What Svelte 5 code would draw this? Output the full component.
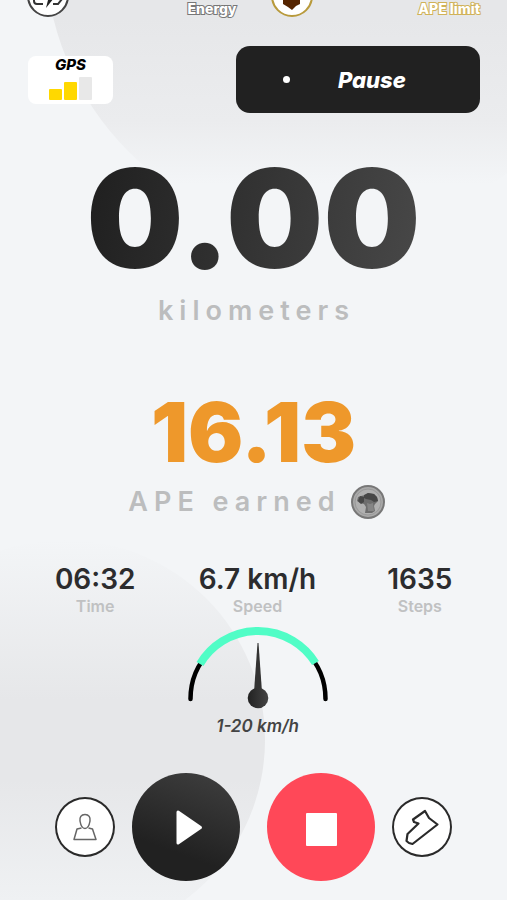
<script>
  const distance = "0.00";
  const earned = "16.13";
  const speedRange = "1-20 km/h";

  const stats = [
    { value: "06:32", label: "Time" },
    { value: "6.7 km/h", label: "Speed" },
    { value: "1635", label: "Steps" },
  ];

  const gpsBars = [
    { height: 11, active: true },
    { height: 18, active: true },
    { height: 23, active: false },
  ];

  let paused = true;

  const togglePause = () => {
    paused = !paused;
  };
</script>

<main class="run">
  <div class="blob blob-top"></div>
  <div class="blob blob-bottom"></div>

  <header class="meters">
    <div class="meter energy">
      <svg class="meter-icon" viewBox="0 0 42 42" aria-hidden="true">
        <circle cx="21" cy="21" r="20" fill="#fff" stroke="#444" stroke-width="2" />
        <path
          d="M13 19H7v7q0 3 3 3h6M26 29h5l4-5-3-6h-5"
          fill="none"
          stroke="#333"
          stroke-width="2"
        />
        <path d="M24 15l-8 10h5l-2 8 8-10h-5z" fill="#222" />
      </svg>
      <span>Energy</span>
    </div>
    <div class="meter limit">
      <svg class="meter-icon" viewBox="0 0 42 42" aria-hidden="true">
        <circle cx="21" cy="21" r="20" fill="#fff" stroke="#b89a3c" stroke-width="2" />
        <path d="M12 16h17v13l-4 2-4 4-4-3-5-3z" fill="#552400" />
      </svg>
      <span>APE limit</span>
    </div>
  </header>

  <div class="top-row">
    <div class="gps">
      <span>GPS</span>
      <div class="bars">
        {#each gpsBars as bar}
          <i class:active={bar.active} style="height: {bar.height}px"></i>
        {/each}
      </div>
    </div>
    <button class="pause" type="button" on:click={togglePause}>
      <span class="dot"></span>
      <span class="pause-text">Pause</span>
    </button>
  </div>

  <section class="distance">
    <strong>{distance}</strong>
    <p class="unit">kilometers</p>
  </section>

  <section class="earned">
    <strong>{earned}</strong>
    <p class="unit">
      <span>APE earned</span>
      <svg class="coin" viewBox="0 0 34 34" aria-hidden="true">
        <circle cx="17" cy="17" r="16" fill="#a9a9a9" stroke="#777" stroke-width="2" />
        <circle cx="17" cy="17" r="13" fill="#b0b0b0" stroke="#999" />
        <path
          d="M10 11l4-1 3-2 6 1 3 3 1 4-3 3-1 2 1 5-3 2h-7l1-6-2-3-4-1-3-2 1-4z"
          fill="#6d6d6d"
        />
        <path d="M9 11l4 1v5l-3 2-3-3zM13 10l4-2 6 1 3 3 1 4-4 1-3-2-5-1-2-1z" fill="#474747" />
        <path d="M16 18l3 1 3-1 1 8h-6z" fill="#858585" />
      </svg>
    </p>
  </section>

  <dl class="stats">
    {#each stats as stat}
      <div>
        <dt>{stat.label}</dt>
        <dd>{stat.value}</dd>
      </div>
    {/each}
  </dl>

  <figure class="gauge">
    <svg viewBox="0 0 144 84" aria-hidden="true">
      <defs>
        <linearGradient id="needle">
          <stop offset="0" stop-color="#222" />
          <stop offset="1" stop-color="#444" />
        </linearGradient>
      </defs>
      <path
        d="M4.5 73A67.5 67.5 0 0 1 139.5 73"
        fill="none"
        stroke="#000"
        stroke-width="4.5"
        stroke-linecap="round"
      />
      <path
        d="M14 38A67.5 67.5 0 0 1 129.5 37"
        fill="none"
        stroke="#50fdc6"
        stroke-width="8"
      />
      <path d="M71.5 17h1L76 66h-8z" fill="#333" />
      <circle cx="72" cy="72" r="10.3" fill="url(#needle)" />
    </svg>
    <figcaption>{speedRange}</figcaption>
  </figure>

  <nav class="controls">
    <button class="small" type="button" aria-label="Profile">
      <svg viewBox="0 0 60 60">
        <path
          d="M30 17.500c-4 0-5.500 3-5 6.500 .5 3 2 7.500 5 7.500s4.500-4.500 5-7.500c.5-3.500-1-6.500-5-6.500z"
          stroke="#666"
          stroke-width="1.5"
        />
        <path
          d="M26.500 31l-4.500 1-3 10.500h22l-3.500-10.500-4-1"
          stroke="#666"
          stroke-width="1.5"
        />
      </svg>
    </button>
    <button class="large play" type="button" aria-label="Resume">
      <svg viewBox="0 0 108 108">
        <path d="M46 39v31l22.500-15.500z" fill="#fff" stroke="#fff" stroke-width="3" stroke-linejoin="round" />
      </svg>
    </button>
    <button class="large stop" type="button" aria-label="Stop">
      <svg viewBox="0 0 108 108">
        <rect x="39" y="40" width="31" height="33" rx="1" fill="#fff" />
      </svg>
    </button>
    <button class="small" type="button" aria-label="Sneaker">
      <svg viewBox="0 0 60 60">
        <path
          d="M33 14l-12 8.500 1 2.500 4.500 1.500-11 10.500-1 7 2.500 2 3.500 1 25-19.500-8.500-6.500z"
          stroke="#2a2a2a"
          stroke-width="2.2"
        />
      </svg>
    </button>
  </nav>
</main>

<style>
  :global(body) {
    background: #f3f5f7;
    margin: 0;
  }

  .run {
    box-sizing: border-box;
    color: #2c2c2e;
    font-family: Inter, "Liberation Sans", sans-serif;
    min-height: 100vh;
    overflow: hidden;
    padding-bottom: 19px;
    position: relative;
    isolation: isolate;
  }

  .blob {
    border-radius: 50%;
    position: absolute;
    z-index: -1;
  }

  .blob-top {
    background: linear-gradient(#e6e7e9 62%, #ebecee 80%, #f3f5f7 91%);
    height: 570px;
    left: 45px;
    top: -335px;
    width: 570px;
  }

  .blob-bottom {
    background: linear-gradient(#f3f5f7, #e6e7e9 40%, #e6e7e9 60%, #eff1f3 90%);
    bottom: -40px;
    height: 400px;
    left: -135px;
    width: 400px;
  }

  .meters {
    display: grid;
    gap: 34px;
    grid-template-columns: 1fr 1fr;
    height: 17px;
    padding: 0 27px;
  }

  .meter {
    align-items: flex-end;
    display: flex;
    height: 17px;
    justify-content: space-between;
  }

  .meter span {
    -webkit-text-stroke: 2px #777;
    color: #fff;
    font-size: 14px;
    font-weight: 800;
    line-height: 16px;
    paint-order: stroke fill;
  }

  .limit span {
    -webkit-text-stroke-color: #d0b257;
  }

  .meter-icon {
    flex: none;
    height: 42px;
    width: 42px;
  }

  .top-row {
    align-items: center;
    display: flex;
    justify-content: space-between;
    margin-top: 29px;
    padding: 0 27px 0 28px;
  }

  .gps {
    align-items: center;
    background: #fff;
    border-radius: 8px;
    box-sizing: border-box;
    display: flex;
    flex-direction: column;
    height: 48px;
    justify-content: space-between;
    padding: 1px 0 4px;
    width: 85px;
  }

  .gps span {
    color: #000;
    font-size: 15px;
    font-style: italic;
    font-weight: 800;
    line-height: 16px;
  }

  .bars {
    align-items: flex-end;
    display: flex;
    gap: 2px;
  }

  .bars i {
    background: #e8e8e8;
    border-radius: 1px;
    width: 13px;
  }

  .bars i.active {
    background: #ffd800;
  }

  button {
    border: none;
    cursor: pointer;
    font: inherit;
    padding: 0;
  }

  .pause {
    align-items: center;
    background: #212121;
    border-radius: 14px;
    color: #fff;
    display: grid;
    grid-template-columns: 102px 1fr;
    height: 67px;
    width: 54%;
  }

  .dot {
    background: #fff;
    border-radius: 50%;
    height: 7px;
    justify-self: center;
    width: 7px;
  }

  .pause-text {
    font-size: 22px;
    font-style: italic;
    font-weight: 800;
    justify-self: start;
  }

  .distance,
  .earned {
    align-items: center;
    display: flex;
    flex-direction: column;
    gap: 16px;
  }

  .distance {
    margin-top: 45px;
  }

  .distance strong {
    background: linear-gradient(100deg, #1f1f1f, #484848);
    background-clip: text;
    color: transparent;
    font-size: 137px;
    font-weight: 900;
    line-height: 120px;
  }

  .earned {
    margin-top: 69px;
  }

  .earned strong {
    color: #ee982b;
    font-size: 82px;
    font-weight: 900;
    line-height: 72px;
  }

  .unit {
    align-items: center;
    color: #bcbdbe;
    display: flex;
    font-size: 27px;
    font-weight: 600;
    gap: 10px;
    letter-spacing: 6px;
    line-height: 34px;
    margin: 0;
    padding-left: 6px;
  }

  .coin {
    height: 34px;
    width: 34px;
  }

  .stats {
    display: grid;
    grid-template-columns: repeat(3, 1fr);
    margin: 43px 0 0;
    padding: 0 6px 0 14px;
    text-align: center;
  }

  .stats div {
    display: flex;
    flex-direction: column-reverse;
  }

  .stats dt {
    color: #c0c1c2;
    font-size: 16px;
    font-weight: 600;
    line-height: 20px;
  }

  .stats dd {
    font-size: 28px;
    font-weight: 600;
    line-height: 34px;
    margin: 0;
  }

  .gauge {
    align-items: center;
    display: flex;
    flex-direction: column;
    gap: 4px;
    margin: 10px 0 0;
    padding-left: 8px;
  }

  .gauge svg {
    height: 84px;
    width: 144px;
  }

  .gauge figcaption {
    color: #444;
    font-size: 17px;
    font-style: italic;
    font-weight: 600;
    line-height: 24px;
  }

  .controls {
    align-items: center;
    display: flex;
    gap: 17px;
    justify-content: center;
    margin-top: 35px;
  }

  .controls button {
    border-radius: 50%;
    box-sizing: border-box;
  }

  .controls svg {
    display: block;
    fill: none;
    height: 100%;
    stroke-linejoin: round;
    width: 100%;
  }

  .small {
    background: #fff;
    box-shadow: inset 0 0 0 2px #2a2a2a;
    height: 60px;
    width: 60px;
  }

  .large {
    height: 108px;
    width: 108px;
  }

  .play {
    background: linear-gradient(20deg, #212121 30%, #404040);
    margin-right: 10px;
  }

  .stop {
    background: #ff4858;
  }
</style>
